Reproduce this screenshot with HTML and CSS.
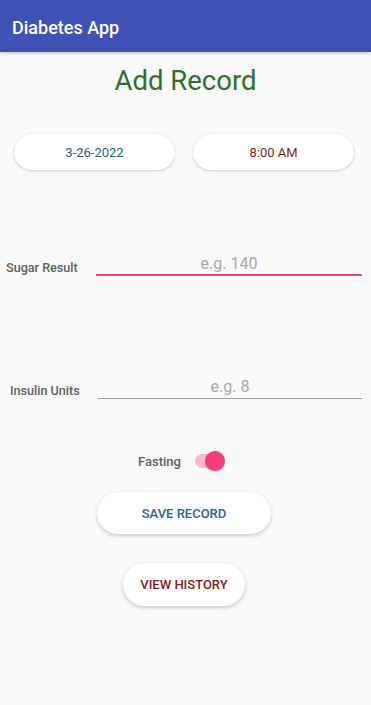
FILE: index.html
```html
<!DOCTYPE html>
<html>
<head>
<meta charset="utf-8">
<link rel="stylesheet" href="styles.css">
</head>
<body>
<div class="appbar"><span class="appbar-title">Diabetes App</span></div>
<main class="content">
  <h1 class="heading">Add Record</h1>
  <div class="pickers">
    <button class="pill pill-date">3-26-2022</button>
    <button class="pill pill-time">8:00 AM</button>
  </div>
  <div class="field field-sugar">
    <label class="field-label">Sugar Result</label>
    <div class="field-input focused"><span class="placeholder">e.g. 140</span></div>
  </div>
  <div class="field field-insulin">
    <label class="field-label">Insulin Units</label>
    <div class="field-input"><span class="placeholder">e.g. 8</span></div>
  </div>
  <div class="fasting">
    <span class="fasting-label">Fasting</span>
    <span class="switch"><span class="switch-track"></span><span class="switch-thumb"></span></span>
  </div>
  <button class="action action-save">SAVE RECORD</button>
  <button class="action action-history">VIEW HISTORY</button>
</main>
</body>
</html>
```
FILE: styles.css
```css
* { box-sizing: border-box; }
html, body { margin: 0; padding: 0; }
body {
  width: 371px;
  height: 705px;
  background: #fafafa;
  font-family: Roboto, "Noto Sans", sans-serif;
  overflow: hidden;
}
.appbar {
  height: 52px;
  background: #3f51b5;
  display: flex;
  align-items: center;
  padding-left: 12px;
  box-shadow: 0 1px 3px rgba(0,0,0,0.25);
  position: relative;
}
.appbar-title {
  color: #fff;
  font-size: 18px;
  font-weight: 500;
  margin-top: 2px;
}
.content {
  display: flex;
  flex-direction: column;
}
.heading {
  margin: 12px 0 0;
  text-align: center;
  font-size: 27.5px;
  font-weight: 400;
  color: #2e6f30;
  line-height: 34px;
}
.pickers {
  display: flex;
  gap: 18px;
  padding: 0 17px 0 14px;
  margin-top: 36px;
}
.pill {
  flex: 1;
  height: 36px;
  border: none;
  border-radius: 18px;
  background: #fff;
  box-shadow: 0 1px 3px rgba(0,0,0,0.18), 0 0 1px rgba(0,0,0,0.08);
  font-family: Roboto, sans-serif;
  font-size: 13px;
  padding: 0;
}
.pill-date { color: #2a5d86; }
.pill-time { color: #7f1d1d; }
.field {
  display: flex;
  align-items: flex-end;
  padding-right: 9px;
}
.field-sugar { margin-top: 80px; padding-left: 6px; }
.field-insulin { margin-top: 97px; padding-left: 10px; }
.field-label {
  font-size: 12.6px;
  font-weight: 500;
  color: #5e5e5e;
  line-height: 14px;
}
.field-sugar .field-label { width: 90px; margin-bottom: 1px; }
.field-insulin .field-label { width: 88px; margin-bottom: 1px; }
.field-input {
  flex: 1;
  height: 26px;
  border-bottom: 1px solid #9e9e9e;
  display: flex;
  justify-content: center;
  align-items: flex-start;
}
.field-input.focused {
  border-bottom: 2px solid #e8467c;
}
.placeholder {
  font-size: 16px;
  color: #a8a8a8;
  line-height: 20px;
  margin-top: 4px;
}
.fasting {
  display: flex;
  align-items: center;
  justify-content: center;
  margin-top: 52px;
  gap: 14px;
  padding-right: 8px;
}
.fasting-label {
  font-size: 13px;
  font-weight: 500;
  color: #5e5e5e;
}
.switch {
  position: relative;
  width: 30px;
  height: 20px;
  display: inline-block;
}
.switch-track {
  position: absolute;
  left: 0;
  top: 3px;
  width: 28px;
  height: 14px;
  border-radius: 7px;
  background: #f8bbd0;
}
.switch-thumb {
  position: absolute;
  left: 10px;
  top: 0;
  width: 20px;
  height: 20px;
  border-radius: 50%;
  background: #f43e7c;
  box-shadow: 0 1px 2px rgba(0,0,0,0.25);
}
.action {
  align-self: center;
  border: none;
  background: #fff;
  height: 42px;
  border-radius: 21px;
  box-shadow: 0 2px 4px rgba(0,0,0,0.18), 0 0 1px rgba(0,0,0,0.1);
  font-family: Roboto, sans-serif;
  font-size: 13px;
  font-weight: 500;
  padding: 0;
}
.action-save {
  width: 174px;
  margin-top: 21px;
  margin-left: -3px;
  color: #30618c;
}
.action-history {
  width: 122px;
  margin-top: 29px;
  margin-left: -3px;
  color: #7f2020;
  height: 43px;
}
```
